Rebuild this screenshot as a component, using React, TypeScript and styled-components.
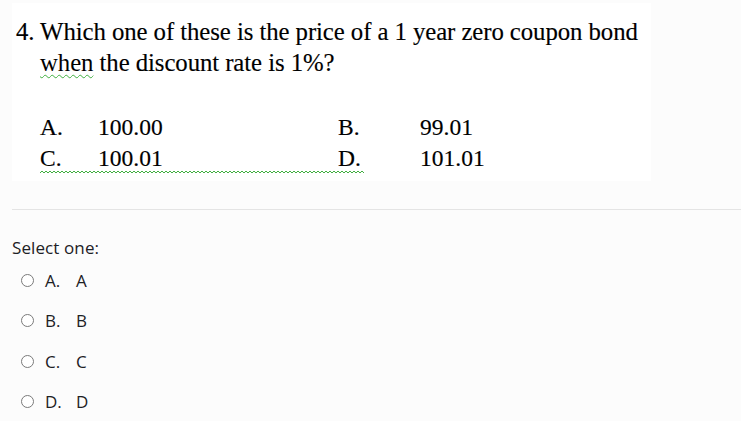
import React from "react";
import styled, { createGlobalStyle } from "styled-components";

const Global = createGlobalStyle`
  html, body { margin: 0; padding: 0; background: #fcfcfc; }
  body { width: 741px; height: 421px; overflow: hidden; }
`;

const Page = styled.div`
  padding: 3px 0 0 0;
`;

const Figure = styled.div`
  margin-left: 12px;
  width: 639px;
  height: 178px;
  background: #ffffff;
  box-sizing: border-box;
  padding: 0 0 0 4px;
  font-family: "Liberation Serif", "Times New Roman", serif;
  color: #000;
  -webkit-text-stroke: 0.15px #000;
`;

const Question = styled.div`
  font-size: 24.8px;
  line-height: 31px;
  padding-top: 13px;
  letter-spacing: -0.08px;
`;

const Indent = styled.div`
  padding-left: 24px;
`;

const Squiggle = styled.span`
  text-decoration: underline wavy #3fae3f;
  text-decoration-thickness: 1px;
  text-underline-offset: 3px;
  -webkit-text-stroke: 0;
`;

const Options = styled.div`
  margin-top: 34px;
  margin-left: 24px;
  font-size: 23.5px;
  line-height: 31px;
`;

const OptRow = styled.div`
  position: relative;
  display: grid;
  grid-template-columns: 58px 240px 82px auto;
`;

const Wave = styled.svg`
  position: absolute;
  left: 0;
  top: 27px;
  width: 324px;
  height: 4px;
`;

const Divider = styled.hr`
  margin: 28px 0 0 12px;
  border: none;
  border-top: 1px solid #e4e4e4;
  height: 0;
`;

const Answer = styled.div`
  padding: 27px 0 0 12px;
  font-family: "Open Sans", "Noto Sans", sans-serif;
  font-size: 17px;
  color: #1d2125;
`;

const Prompt = styled.div`
  line-height: 22px;
  letter-spacing: 0.1px;
`;

const ChoiceList = styled.div`
  display: flex;
  flex-direction: column;
  gap: 18.5px;
  margin-top: 10px;
  padding-left: 9px;
`;

const Choice = styled.label`
  display: flex;
  align-items: center;
  height: 22px;
`;

const Radio = styled.span`
  width: 11px;
  height: 11px;
  border: 1.5px solid #7a7a7a;
  border-radius: 50%;
  background: #fff;
  margin-right: 11px;
  flex: none;
`;

const Letter = styled.span`
  width: 31px;
`;

const waveD = (() => {
  let d = "M0 3";
  for (let x = 0; x < 324; x += 4) {
    d += ` L${x + 2} 1 L${x + 4} 3`;
  }
  return d;
})();

export default function App() {
  return (
    <>
      <Global />
      <Page>
        <Figure>
          <Question>
            <div>4. Which one of these is the price of a 1 year zero coupon bond</div>
            <Indent>
              <Squiggle>when</Squiggle> the discount rate is 1%?
            </Indent>
          </Question>
          <Options>
            <OptRow>
              <span>A.</span>
              <span>100.00</span>
              <span>B.</span>
              <span>99.01</span>
            </OptRow>
            <OptRow>
              <span>C.</span>
              <span>100.01</span>
              <span>D.</span>
              <span>101.01</span>
              <Wave viewBox="0 0 324 4" preserveAspectRatio="none">
                <path d={waveD} fill="none" stroke="#3fae3f" strokeWidth="1" />
              </Wave>
            </OptRow>
          </Options>
        </Figure>
        <Divider />
        <Answer>
          <Prompt>Select one:</Prompt>
          <ChoiceList>
            {["A", "B", "C", "D"].map((l) => (
              <Choice key={l}>
                <Radio />
                <Letter>{l}.</Letter>
                <span>{l}</span>
              </Choice>
            ))}
          </ChoiceList>
        </Answer>
      </Page>
    </>
  );
}
